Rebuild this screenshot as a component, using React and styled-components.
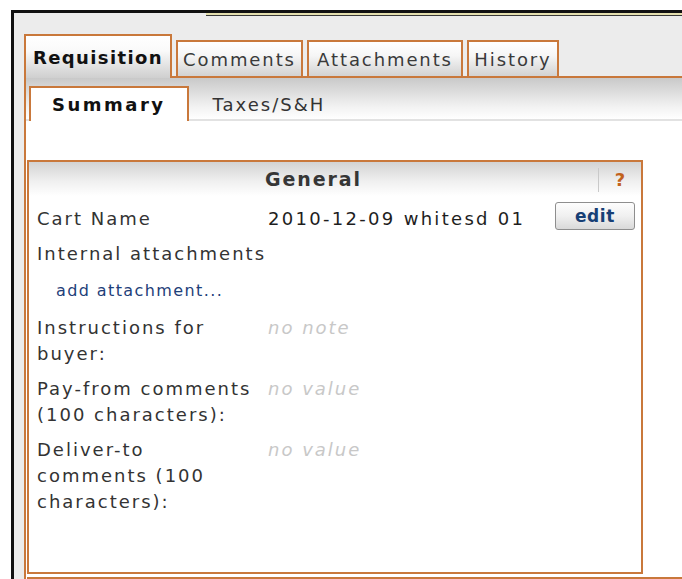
import React from "react";
import styled, { createGlobalStyle } from "styled-components";

const ORANGE = "#c9783b";

const Global = createGlobalStyle`
  html, body {
    margin: 0;
    padding: 0;
    background: #fff;
    overflow: hidden;
  }
  body {
    font-family: "DejaVu Sans", Verdana, sans-serif;
  }
`;

const Page = styled.div`
  padding: 10px 0 0 11px;
`;

const Frame = styled.div`
  border-left: 3px solid #111;
  background: #ececec;
  min-height: 620px;
`;

const TopEdge = styled.div`
  display: flex;
  align-items: flex-start;
  height: 6px;
`;

const TopEdgePlain = styled.div`
  width: 192px;
  height: 3px;
  background: #111;
`;

const TopEdgeRule = styled.div`
  flex: 1;
  height: 2px;
  border-top: 3px solid #111;
  border-bottom: 1px solid #3a3a3a;
  background: #e4dfae;
`;

const TabBar = styled.div`
  display: flex;
  align-items: flex-end;
  gap: 4px;
  margin: 18px 0 0 10px;
  border-bottom: 2px solid ${ORANGE};
`;

const Tab = styled.div`
  box-sizing: border-box;
  width: ${(p) => p.$width}px;
  height: ${(p) => (p.$active ? 44 : 36)}px;
  margin-bottom: ${(p) => (p.$active ? -2 : 0)}px;
  padding-top: ${(p) => (p.$active ? 10 : 6)}px;
  border: 2px solid ${ORANGE};
  border-bottom: none;
  background: ${(p) =>
    p.$active
      ? "linear-gradient(#fff 0%, #fafafa 35%, #cfcfcf 100%)"
      : "linear-gradient(#fff 0%, #f6f6f6 40%, #d2d2d2 100%)"};
  text-align: center;
  font-size: 18px;
  line-height: 24px;
  letter-spacing: ${(p) => (p.$active ? 1.4 : 1.9)}px;
  font-weight: ${(p) => (p.$active ? 700 : 400)};
  color: ${(p) => (p.$active ? "#111" : "#3a3a3a")};
  white-space: nowrap;
`;

const Pane = styled.div`
  margin-left: 10px;
  border-left: 2px solid ${ORANGE};
  background: #fff;
  min-height: 560px;
`;

const SubTabBar = styled.div`
  display: flex;
  align-items: flex-end;
  padding: 8px 0 0 3px;
  background: linear-gradient(#c9c9c9 0%, #f2f2f2 70%, #fff 100%);
  border-bottom: 2px solid #e2e2e2;
`;

const SubTab = styled.div`
  box-sizing: border-box;
  height: 35px;
  margin-bottom: -2px;
  padding: ${(p) => (p.$active ? "5px 21px 0" : "5px 22px 0")};
  border: 2px solid ${(p) => (p.$active ? ORANGE : "transparent")};
  border-bottom: none;
  background: ${(p) => (p.$active ? "#fff" : "transparent")};
  font-size: 18px;
  line-height: 24px;
  letter-spacing: ${(p) => (p.$active ? 2.5 : 2)}px;
  font-weight: ${(p) => (p.$active ? 700 : 400)};
  color: ${(p) => (p.$active ? "#111" : "#333")};
  white-space: nowrap;
`;

const PaneBody = styled.div`
  padding: 39px 0 0 1px;
`;

const Panel = styled.section`
  box-sizing: border-box;
  width: ${(p) => p.$width || "auto"};
  min-height: ${(p) => p.$minHeight || 0}px;
  margin-top: ${(p) => p.$gap || 0}px;
  border: 2px solid ${ORANGE};
  background: #fff;
`;

const PanelHeader = styled.div`
  display: flex;
  align-items: stretch;
  height: 34px;
  background: linear-gradient(#d3d3d3 0%, #efefef 55%, #fff 100%);
`;

const PanelTitle = styled.h2`
  flex: 1;
  margin: 0;
  text-align: center;
  font-size: 19px;
  line-height: 34px;
  letter-spacing: 1.9px;
  font-weight: 700;
  color: #363636;
`;

const HeaderDivider = styled.div`
  width: 1px;
  margin: 6px 0 4px;
  background: #c9c9c9;
`;

const HelpMark = styled.span`
  width: 42px;
  text-align: center;
  font-size: 18px;
  line-height: 36px;
  font-weight: 700;
  color: #c2621d;
`;

const PanelBody = styled.div`
  display: flex;
  flex-direction: column;
  gap: 9px;
  padding: 10px 6px 57px 8px;
`;

const Field = styled.div`
  display: grid;
  grid-template-columns: 220px 1fr;
  column-gap: 11px;
  font-size: 18px;
  line-height: 26px;
  letter-spacing: 2px;
`;

const Label = styled.div`
  grid-column: ${(p) => (p.$wide ? "1 / -1" : "auto")};
  color: #333;
`;

const Value = styled.div`
  display: flex;
  justify-content: space-between;
  align-items: flex-start;
  letter-spacing: ${(p) => (p.$empty ? 2 : 2.3)}px;
  color: ${(p) => (p.$empty ? "#c8c8c8" : "#1e1e1e")};
  font-style: ${(p) => (p.$empty ? "italic" : "normal")};
`;

const EditButton = styled.button`
  box-sizing: border-box;
  width: 80px;
  height: 28px;
  margin: -4px 0 -2px;
  padding: 0;
  border: 1px solid #8e8e8e;
  border-radius: 3px;
  background: linear-gradient(#fdfdfd 0%, #f0f0f0 50%, #d9d9d9 100%);
  font-family: inherit;
  font-size: 17px;
  font-weight: 700;
  letter-spacing: 0.6px;
  color: #173f75;
  line-height: 26px;
`;

const LinkRow = styled.div`
  padding: 2px 0 2px 19px;
  font-size: 16px;
  line-height: 26px;
  letter-spacing: 1.4px;
  color: #1e4079;
`;

const tabs = [
  { name: "Requisition", width: 148, active: true },
  { name: "Comments", width: 127 },
  { name: "Attachments", width: 156 },
  { name: "History", width: 92 },
];

const fields = [
  { label: "Instructions for buyer:", value: "no note" },
  { label: "Pay-from comments (100 characters):", value: "no value" },
  { label: "Deliver-to comments (100 characters):", value: "no value" },
];

export default function App() {
  return (
    <>
      <Global />
      <Page>
        <Frame>
          <TopEdge>
            <TopEdgePlain />
            <TopEdgeRule />
          </TopEdge>
          <TabBar>
            {tabs.map((t) => (
              <Tab key={t.name} $active={t.active} $width={t.width}>
                {t.name}
              </Tab>
            ))}
          </TabBar>
          <Pane>
            <SubTabBar>
              <SubTab $active>Summary</SubTab>
              <SubTab>Taxes/S&amp;H</SubTab>
            </SubTabBar>
            <PaneBody>
              <Panel $width="616px">
                <PanelHeader>
                  <PanelTitle>General</PanelTitle>
                  <HeaderDivider />
                  <HelpMark>?</HelpMark>
                </PanelHeader>
                <PanelBody>
                  <Field>
                    <Label>Cart Name</Label>
                    <Value>
                      <span>2010-12-09 whitesd 01</span>
                      <EditButton type="button">edit</EditButton>
                    </Value>
                  </Field>
                  <Field>
                    <Label $wide>Internal attachments</Label>
                  </Field>
                  <LinkRow>add attachment...</LinkRow>
                  {fields.map((f) => (
                    <Field key={f.label}>
                      <Label>{f.label}</Label>
                      <Value $empty>{f.value}</Value>
                    </Field>
                  ))}
                </PanelBody>
              </Panel>
              <Panel $gap={3} $minHeight={60} />
            </PaneBody>
          </Pane>
        </Frame>
      </Page>
    </>
  );
}
